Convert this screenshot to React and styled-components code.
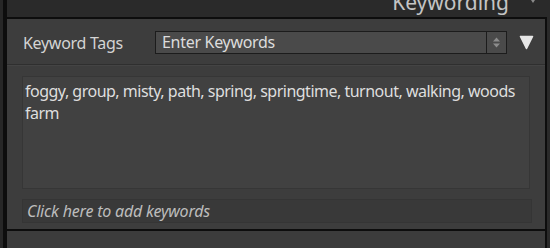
import React from "react";
import styled, { createGlobalStyle } from "styled-components";

const Global = createGlobalStyle`
  html, body { margin: 0; padding: 0; background: #2a2a2a; }
  body { width: 550px; height: 248px; overflow: hidden; font-family: "Noto Sans", "Open Sans", sans-serif; }
`;

const Page = styled.div`
  display: flex;
  width: 550px;
  height: 248px;
  background: #2a2a2a;
`;

const LeftGutter = styled.div`
  width: 3px;
  background: #272727;
`;

const Rail = styled.div`
  width: 4px;
  background: #0d0d0d;
`;

const RightGutter = styled.div`
  width: 3px;
  background: #2a2a2a;
`;

const Column = styled.div`
  flex: 1;
  display: flex;
  flex-direction: column;
  min-width: 0;
`;

const Header = styled.div`
  height: 17px;
  display: flex;
  justify-content: flex-end;
  align-items: flex-end;
  overflow: hidden;
  padding-right: 12px;
  gap: 22px;
  background: #2a2a2a;
`;

const Title = styled.div`
  font-size: 21px;
  line-height: 21px;
  color: #c4c4c4;
  padding-bottom: 4px;
`;

const Marker = styled.div`
  align-self: flex-start;
  width: 0;
  height: 0;
  border-left: 2px solid transparent;
  border-right: 2px solid transparent;
  border-top: 3px solid #8a8a8a;
`;

const Panel = styled.div`
  background: #3d3d3d;
  border-top: 2px solid #0d0d0d;
  border-right: 2px solid #0d0d0d;
  border-bottom: 2px solid #0d0d0d;
  display: flex;
  flex-direction: column;
  height: 214px;
  box-sizing: border-box;
`;

const NextPanel = styled.div`
  flex: 1;
  background: #3c3c3c;
  border-right: 2px solid #0d0d0d;
`;

const TagRow = styled.div`
  display: flex;
  align-items: center;
  height: 46px;
  box-sizing: border-box;
  padding: 2px 0 0 16px;
  border-bottom: 1px solid #2f2f2f;
  box-shadow: 0 1px 0 #444444;
`;

const Label = styled.div`
  width: 132px;
  font-size: 16px;
  color: #d4d4d4;
  letter-spacing: -0.3px;
`;

const Select = styled.div`
  width: 352px;
  height: 23px;
  box-sizing: border-box;
  display: flex;
  background: #4a4a4a;
  border: 1px solid #1c1c1c;
`;

const SelectText = styled.div`
  flex: 1;
  padding-left: 6px;
  font-size: 16px;
  line-height: 21px;
  color: #dcdcdc;
  letter-spacing: -0.3px;
`;

const Stepper = styled.div`
  width: 19px;
  border-left: 1px solid #1c1c1c;
  display: flex;
  align-items: center;
  justify-content: center;
`;

const FilterButton = styled.div`
  margin-left: 11px;
  width: 16px;
  height: 16px;
  display: flex;
  align-items: center;
  justify-content: center;
`;

const Body = styled.div`
  flex: 1;
  display: flex;
  flex-direction: column;
  padding: 11px 0 0 15px;
  gap: 10px;
`;

const KeywordBox = styled.div`
  width: 508px;
  height: 113px;
  box-sizing: border-box;
  background: #414141;
  border: 1px solid #363636;
  padding: 3px 2px;
  font-size: 16px;
  line-height: 22px;
  color: #dedede;
  letter-spacing: -0.5px;
`;

const AddInput = styled.div`
  width: 510px;
  height: 24px;
  box-sizing: border-box;
  background: #393939;
  border: 1px solid #353535;
  padding: 0 4px;
  font-size: 16px;
  line-height: 22px;
  font-style: italic;
  color: #bdbdbd;
  letter-spacing: -0.2px;
`;

export default function App() {
  return (
    <>
      <Global />
      <Page>
        <LeftGutter />
        <Rail />
        <Column>
          <Header>
            <Title>Keywording</Title>
            <Marker />
          </Header>
          <Panel>
            <TagRow>
              <Label>Keyword Tags</Label>
              <Select>
                <SelectText>Enter Keywords</SelectText>
                <Stepper>
                  <svg width="9" height="13" viewBox="0 0 9 13">
                    <path d="M1 5.5 L4.5 1.5 L8 5.5 Z" fill="#8c8c8c" />
                    <path d="M1 7.5 L4.5 11.5 L8 7.5 Z" fill="#8c8c8c" />
                  </svg>
                </Stepper>
              </Select>
              <FilterButton>
                <svg width="15" height="15" viewBox="0 0 15 15">
                  <path
                    d="M1.5 1.5 L13.5 1.5 L7.5 13.5 Z"
                    fill="#e6e6e6"
                    stroke="#e6e6e6"
                    strokeWidth="1.6"
                    strokeLinejoin="round"
                  />
                </svg>
              </FilterButton>
            </TagRow>
            <Body>
              <KeywordBox>
                foggy, group, misty, path, spring, springtime, turnout, walking, woods farm
              </KeywordBox>
              <AddInput>Click here to add keywords</AddInput>
            </Body>
          </Panel>
          <NextPanel />
        </Column>
        <RightGutter />
      </Page>
    </>
  );
}
